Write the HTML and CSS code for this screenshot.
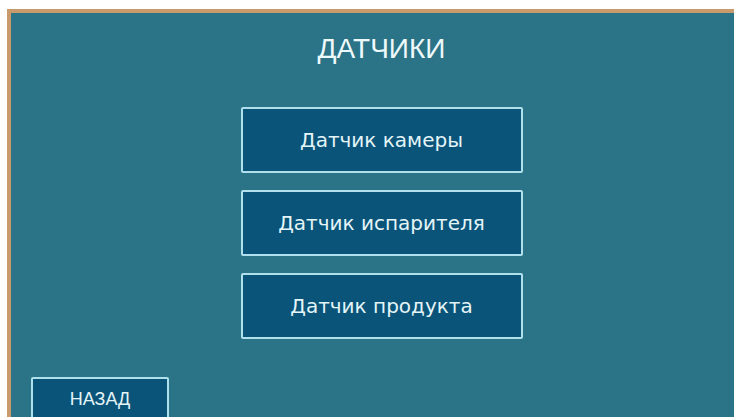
FILE: index.html
```html
<!DOCTYPE html>
<html lang="ru">
<head>
<meta charset="utf-8">
<title>Датчики</title>
<link rel="stylesheet" href="styles.css">
</head>
<body>
<div class="frame">
  <div class="screen">
    <h1 class="title">ДАТЧИКИ</h1>
    <div class="menu">
      <button class="btn">Датчик камеры</button>
      <button class="btn">Датчик испарителя</button>
      <button class="btn">Датчик продукта</button>
    </div>
    <div class="footer">
      <button class="btn btn-back">НАЗАД</button>
    </div>
  </div>
</div>
</body>
</html>
```

FILE: styles.css
```css
html, body {
  margin: 0;
  height: 100%;
  background: #ffffff;
  overflow: hidden;
}

.frame {
  box-sizing: border-box;
  height: calc(100% - 9px);
  margin: 9px 0 0 7px;
  border-top: 4px solid #c99a6c;
  border-left: 4px solid #c99a6c;
  background: #2b7386;
  overflow: hidden;
}

.screen {
  width: 741px;
  height: 100%;
  display: flex;
  flex-direction: column;
  align-items: center;
  font-family: "DejaVu Sans", Verdana, sans-serif;
}

.title {
  margin: 20px 0 0;
  font-family: "Liberation Sans", Arial, sans-serif;
  font-weight: normal;
  font-size: 28px;
  line-height: 32px;
  color: #eef9fb;
}

.menu {
  margin-top: 42px;
  display: flex;
  flex-direction: column;
  gap: 17px;
}

.btn {
  box-sizing: border-box;
  width: 282px;
  height: 66px;
  padding: 0;
  background: #0a5479;
  border: 2px solid #afe0ec;
  border-radius: 2px;
  color: #e4f5f8;
  font-family: "DejaVu Sans", Verdana, sans-serif;
  font-size: 20px;
}

.footer {
  align-self: stretch;
  margin-top: auto;
  padding-left: 20px;
}

.btn-back {
  width: 138px;
  height: 50px;
  margin-bottom: -10px;
  padding-bottom: 6px;
  font-family: "Liberation Sans", Arial, sans-serif;
  font-size: 18px;
}
```
